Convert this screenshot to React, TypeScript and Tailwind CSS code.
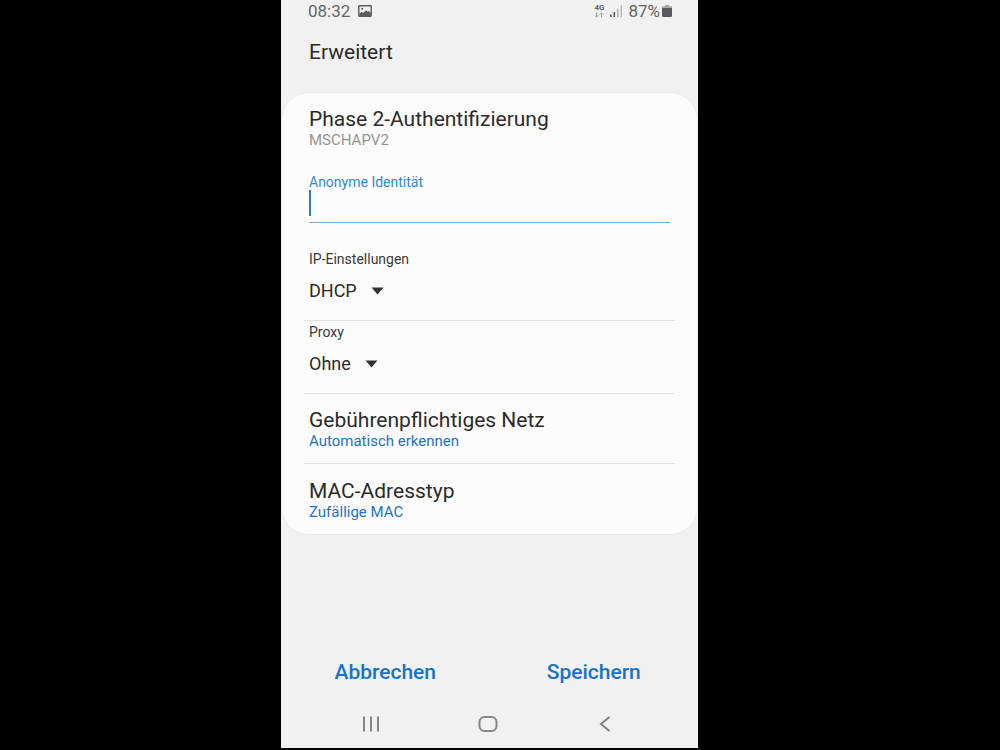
import { useState } from 'react'
import type { ReactNode } from 'react'

interface SelectRowProps {
  id: string
  label: string
  value: string
  options: string[]
  onChange: (value: string) => void
}

interface PreferenceProps {
  title: string
  summary: string
  muted?: boolean
}

const IP_OPTIONS = ['DHCP', 'Statisch']
const PROXY_OPTIONS = ['Ohne', 'Manuell', 'Autom. Proxy-Konfig.']

function StatusBar() {
  return (
    <div className="flex h-[22px] items-center justify-between pl-[27px] pr-[26px] text-[17px] leading-[22px] text-[#666666]">
      <div className="flex items-center gap-2">
        <span>08:32</span>
        <svg width="14" height="12" viewBox="0 0 14 12" aria-hidden>
          <rect x="0.8" y="0.8" width="12.4" height="10.4" rx="0.6" fill="none" stroke="#5a5a5a" strokeWidth="1.4" />
          <path d="M1.5 8.4 L3.6 7 L5.2 8 L8 5.2 L9.6 6.8 L10.8 6 L12.8 8 V11 H1.5 Z" fill="#5a5a5a" />
          <circle cx="4.2" cy="3.8" r="1" fill="#5a5a5a" />
        </svg>
      </div>
      <div className="flex items-center">
        <div className="flex flex-col items-center">
          <span className="text-[8px] font-bold leading-[8px]">4G</span>
          <svg width="10" height="6" viewBox="0 0 10 6" fill="none" stroke="#a0a0a0" aria-hidden>
            <path d="M2.5 0.5 V5 M0.7 3.3 L2.5 5.2 L4.3 3.3" />
            <path d="M7.5 5.5 V1 M5.7 2.7 L7.5 0.8 L9.3 2.7" />
          </svg>
        </div>
        <svg className="ml-[6px]" width="13" height="12" viewBox="0 0 13 12" aria-hidden>
          <rect x="0" y="9.5" width="1.6" height="2.5" fill="#5a5a5a" />
          <rect x="3.5" y="7" width="1.6" height="5" fill="#5a5a5a" />
          <rect x="7" y="3.5" width="1.6" height="8.5" fill="#b8b8b8" />
          <rect x="10.5" y="0.5" width="1.6" height="11.5" fill="#b8b8b8" />
        </svg>
        <span className="ml-[5px]">87%</span>
        <svg className="ml-[2px]" width="10" height="12" viewBox="0 0 10 12" aria-hidden>
          <path d="M3 0 H7 V1.3 H10 V3 H0 V1.3 H3 Z" fill="#a8a8a8" />
          <path d="M0 3 H10 V11 Q10 12 9 12 H1 Q0 12 0 11 Z" fill="#5a5a5a" />
        </svg>
      </div>
    </div>
  )
}

function Preference({ title, summary, muted }: PreferenceProps) {
  return (
    <button type="button" className="block w-full px-[5px] text-left">
      <span className="block text-[21px] leading-[26px] text-[#2b2b2b]">{title}</span>
      <span className={muted ? 'block text-[15px] leading-4 text-[#949494]' : 'block text-[15px] leading-4 text-[#1f73c4]'}>
        {summary}
      </span>
    </button>
  )
}

function SelectRow({ id, label, value, options, onChange }: SelectRowProps) {
  return (
    <div className="px-[5px]">
      <label htmlFor={id} className="block text-[14px] leading-4 text-[#3a3a3a]">
        {label}
      </label>
      <div className="mt-3 flex items-center gap-[14px]">
        <select
          id={id}
          value={value}
          onChange={(e) => onChange(e.target.value)}
          className="h-6 appearance-none bg-transparent p-0 text-[18px] leading-6 text-[#2b2b2b] outline-none [field-sizing:content]"
        >
          {options.map((o) => (
            <option key={o}>{o}</option>
          ))}
        </select>
        <svg className="pointer-events-none" width="13" height="8" viewBox="0 0 13 8" aria-hidden>
          <path d="M0.5 0.5 H12.5 L6.5 7.5 Z" fill="#333333" />
        </svg>
      </div>
    </div>
  )
}

function NavButton({ label, children }: { label: string; children: ReactNode }) {
  return (
    <button type="button" aria-label={label} className="flex h-12 items-center justify-center text-[#858585]">
      {children}
    </button>
  )
}

export default function App() {
  const [identity, setIdentity] = useState('')
  const [ip, setIp] = useState('DHCP')
  const [proxy, setProxy] = useState('Ohne')

  return (
    <div className="grid min-h-screen grid-cols-[281fr_417fr_302fr] bg-black pb-[2px] font-[Roboto,sans-serif]">
      <main className="col-start-2 flex flex-col bg-[#f1f1f1]">
        <StatusBar />
        <h1 className="mt-[18px] px-7 text-[21px] leading-6 text-[#2b2b2b]">Erweitert</h1>

        <form id="advanced" className="mt-7 rounded-[28px] border border-[#ebebeb] bg-[#fcfcfc] px-[22px] pb-[14px] pt-[13px]">
          <Preference title="Phase 2-Authentifizierung" summary="MSCHAPV2" muted />

          <div className="mt-[26px] px-[5px]">
            <label htmlFor="identity" className="block text-[14px] leading-4 text-[#2f8ad8]">
              Anonyme Identität
            </label>
            <div className="flex items-start border-b border-[#6fa9d8] pb-[6px]">
              <span className="h-[26px] w-[2px] bg-[#2a7fce]" />
              <input
                id="identity"
                value={identity}
                onChange={(e) => setIdentity(e.target.value)}
                className="h-[26px] min-w-0 flex-1 bg-transparent text-[18px] caret-transparent outline-none"
              />
            </div>
          </div>

          <div className="mt-7">
            <SelectRow id="ip" label="IP-Einstellungen" value={ip} options={IP_OPTIONS} onChange={setIp} />
          </div>
          <div className="mt-[17px] border-t border-[#e2e2e2] pt-[3px]">
            <SelectRow id="proxy" label="Proxy" value={proxy} options={PROXY_OPTIONS} onChange={setProxy} />
          </div>
          <div className="mt-[17px] border-t border-[#e2e2e2] pt-[13px]">
            <Preference title="Gebührenpflichtiges Netz" summary="Automatisch erkennen" />
          </div>
          <div className="mt-[14px] border-t border-[#e2e2e2] pt-[14px]">
            <Preference title="MAC-Adresstyp" summary="Zufällige MAC" />
          </div>
        </form>

        <div className="mt-auto grid grid-cols-2 text-[21px] font-medium leading-8 text-[#1a73c6]">
          <button type="button">Abbrechen</button>
          <button type="submit" form="advanced" onClick={(e) => e.preventDefault()}>
            Speichern
          </button>
        </div>

        <nav className="mt-3 grid grid-cols-3 pl-[31px] pr-[34px]">
          <NavButton label="Letzte Apps">
            <svg width="18" height="16" viewBox="0 0 18 16" stroke="currentColor" strokeWidth="2" aria-hidden>
              <path d="M2 0.5 V15.5 M9 0.5 V15.5 M16 0.5 V15.5" />
            </svg>
          </NavButton>
          <NavButton label="Startseite">
            <svg width="20" height="16" viewBox="0 0 20 16" fill="none" stroke="currentColor" strokeWidth="2" aria-hidden>
              <rect x="1.5" y="1" width="17" height="14" rx="5" />
            </svg>
          </NavButton>
          <NavButton label="Zurück">
            <svg width="12" height="16" viewBox="0 0 12 16" fill="none" stroke="currentColor" strokeWidth="2" aria-hidden>
              <path d="M10.5 1 L2 8 L10.5 15" />
            </svg>
          </NavButton>
        </nav>
      </main>
    </div>
  )
}
